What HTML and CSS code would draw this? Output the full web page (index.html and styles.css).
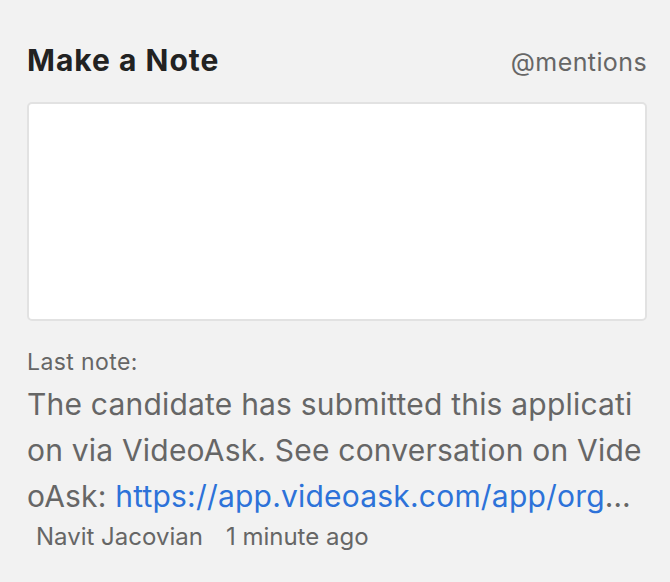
FILE: index.html
```html
<!DOCTYPE html>
<html lang="en">
<head>
    <meta charset="UTF-8">
    <meta name="viewport" content="width=device-width, initial-scale=1.0">
    <title>Make a Note</title>
    <link rel="stylesheet" href="styles.css">
</head>
<body>
    <div class="note-panel">
        <div class="note-header">
            <h2 class="note-title">Make a Note</h2>
            <span class="note-mentions">@mentions</span>
        </div>

        <textarea class="note-input"></textarea>

        <div class="last-note">
            <div class="last-note-label">Last note:</div>
            <p class="last-note-text">The candidate has submitted this application via VideoAsk. See conversation on VideoAsk: <a href="#">https://app.videoask.com/app/organizations/candidates/conversation/1234</a></p>
            <div class="last-note-meta">
                <span class="meta-author">Navit Jacovian</span>
                <span class="meta-time">1 minute ago</span>
            </div>
        </div>
    </div>
</body>
</html>
```

FILE: styles.css
```css
body {
    margin: 0;
    padding: 0;
    background-color: #f2f2f2;
    font-family: Inter, "Noto Sans", sans-serif;
}

.note-panel {
    padding: 42px 23px 0 27px;
}

.note-header {
    display: flex;
    justify-content: space-between;
    align-items: baseline;
}

.note-title {
    margin: 0;
    font-size: 30px;
    line-height: 36px;
    font-weight: 700;
    letter-spacing: 1px;
    color: #222;
}

.note-mentions {
    font-size: 25px;
    line-height: 30px;
    letter-spacing: 0.4px;
    color: #666;
}

.note-input {
    display: block;
    box-sizing: border-box;
    width: 100%;
    height: 219px;
    margin-top: 24px;
    background: #fff;
    border: 2px solid #e2e2e2;
    border-radius: 5px;
    resize: none;
}

.last-note {
    margin-top: 27px;
}

.last-note-label {
    font-size: 23px;
    line-height: 28px;
    letter-spacing: 0.4px;
    color: #666;
}

.last-note-text {
    margin: 5px 0 0;
    padding-right: 2px;
    font-size: 30px;
    line-height: 46px;
    letter-spacing: 0.2px;
    color: #666;
    word-break: break-all;
    display: -webkit-box;
    -webkit-line-clamp: 3;
    -webkit-box-orient: vertical;
    overflow: hidden;
}

.last-note-text a {
    color: #2d72d9;
    text-decoration: none;
}

.last-note-meta {
    display: flex;
    gap: 23px;
    margin-top: 3px;
    padding-left: 9px;
    font-size: 24px;
    line-height: 30px;
    color: #666;
}
```
